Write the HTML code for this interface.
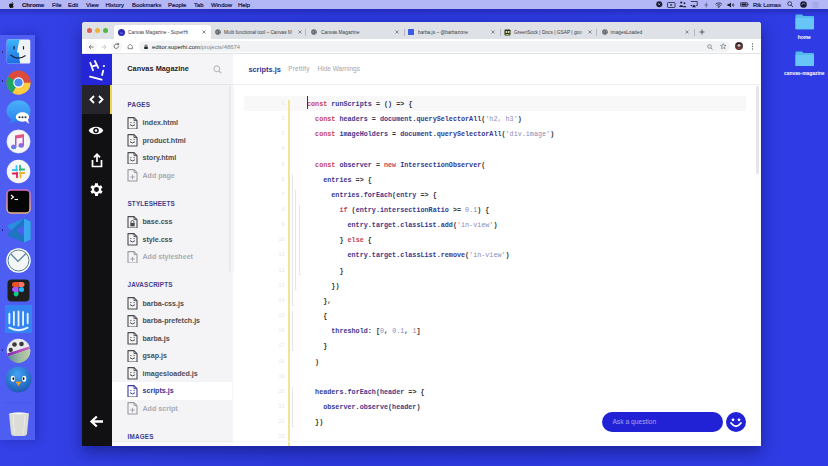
<!DOCTYPE html>
<html><head><meta charset="utf-8">
<style>
*{margin:0;padding:0;box-sizing:border-box}
html,body{width:828px;height:466px;overflow:hidden}
body{position:relative;font-family:"Liberation Sans",sans-serif;background:#2c38de}
.a{position:absolute}
.t{position:absolute;white-space:nowrap;line-height:1}
#desk{left:0;top:0;width:828px;height:466px;background:linear-gradient(180deg,rgba(10,10,90,.28) 9px,rgba(10,10,90,.12) 13px,rgba(10,10,90,0) 16px),linear-gradient(90deg,#3441e6 0%,#2d39dd 40%,#2f3ce5 100%)}
#menubar{left:0;top:0;width:828px;height:9px;background:#b3b7f6}
#menubar .t{top:2.5px;font-size:5.9px;color:#15154a;-webkit-text-stroke:0.2px #15154a}
#dock{left:0;top:34.800px;width:34.800px;height:405px;background:#4f5ef2;box-shadow:2px 0 9px rgba(20,25,140,.45)}
.di{position:absolute;left:6px;width:24px;height:24px;border-radius:6px}
.dot{position:absolute;left:1.5px;width:1.6px;height:1.6px;border-radius:1px;background:#1a1f60}
#win{left:82px;top:22px;width:679px;height:424px;background:#fff;border-radius:3px 3px 0 0;box-shadow:0 6px 16px rgba(10,15,90,.55)}
#tabs{left:0;top:0;width:679px;height:16.5px;background:#dee1e6;border-radius:3px 3px 0 0}
#toolbar{left:0;top:16.5px;width:679px;height:15px;background:#fff;border-bottom:1px solid #e3e3e3}
.tab .t{font-size:4.8px;color:#3c4043;top:7.4px}
.tl{position:absolute;top:5.7px;width:5.4px;height:5.4px;border-radius:50%}
#rail{left:0;top:31.5px;width:30px;height:392.5px;background:#111113}
#side{left:30px;top:31.5px;width:121px;height:392.5px;background:#f4f4f6}
#main{left:151px;top:31.5px;width:528px;height:392.5px;background:#fff}
.fn{position:absolute;left:30px;font-size:6.9px;font-weight:bold;color:#4a4a4e;white-space:nowrap;line-height:1}
.sec{position:absolute;left:15.5px;font-size:6.3px;font-weight:bold;color:#3a3a9a;letter-spacing:.25px;white-space:nowrap;line-height:1}
.fi{position:absolute;left:15px;width:11px;height:12px}
.code{position:absolute;font-family:"Liberation Mono",monospace;font-size:6.67px;line-height:1;white-space:pre;color:#38388e;font-weight:bold;transform:scaleY(1.1);transform-origin:0 55%}
.k{color:#c4435a}
.s{color:#8c8cb4;font-weight:normal}
.p{color:#333}
.ln{position:absolute;font-family:"Liberation Mono",monospace;font-size:5px;color:#e6e6ea;line-height:1;text-align:right;width:12px}
</style></head><body>
<div id="desk" class="a"></div>

<!-- menu bar -->
<div id="menubar" class="a">
  <svg class="a" style="left:9px;top:1.5px" width="5" height="6" viewBox="0 0 10 12"><path d="M8.3 6.4c0-1.5 1.2-2.2 1.3-2.3-.7-1-1.8-1.2-2.2-1.2-.9-.1-1.8.6-2.3.6-.5 0-1.2-.5-2-.5C2 3 1 3.6.5 4.6c-1 1.8-.3 4.4.7 5.8.5.7 1 1.5 1.8 1.4.7 0 1-.5 1.9-.5s1.1.5 1.9.4c.8 0 1.3-.7 1.7-1.4.5-.8.7-1.6.8-1.6-.1 0-1.6-.6-1.6-2.300zM6.900 2c.4-.5.7-1.200.6-1.900-.6 0-1.300.4-1.700.9-.4.4-.7 1.100-.6 1.800.7.100 1.300-.300 1.700-.800z" fill="#111"/></svg>
  <div class="t" style="left:22px;font-weight:bold">Chrome</div>
  <div class="t" style="left:52px">File</div>
  <div class="t" style="left:68px">Edit</div>
  <div class="t" style="left:86px">View</div>
  <div class="t" style="left:105.5px">History</div>
  <div class="t" style="left:132px">Bookmarks</div>
  <div class="t" style="left:168px">People</div>
  <div class="t" style="left:194px">Tab</div>
  <div class="t" style="left:211px">Window</div>
  <div class="t" style="left:238px">Help</div>
  <div class="t" style="left:753px">Rik Lomas</div>
  <svg class="a" style="left:656px;top:1.300px" width="6.500" height="6.500" viewBox="0 0 13 13"><circle cx="6.500" cy="6.500" r="6" fill="#1b1b30"/><path d="M4 6.500H9M6.500 4V9" stroke="#b3b7f6" stroke-width="1.400" transform="rotate(45 6.500 6.500)"/></svg>
  <svg class="a" style="left:667px;top:1.600px" width="8.500" height="6" viewBox="0 0 17 12"><rect x="1" y="1" width="15" height="10" rx="1.500" stroke="#1b1b30" stroke-width="1.500" fill="none"/><path d="M7 3.500L11 6L7 8.500Z" fill="#1b1b30"/></svg>
  <svg class="a" style="left:679px;top:1.300px" width="7.500" height="6.500" viewBox="0 0 15 13"><circle cx="4.500" cy="3" r="2.200" fill="#1b1b30"/><path d="M0.500 12C0.500 7 8.500 7 8.500 12Z" fill="#1b1b30"/><circle cx="11" cy="4.500" r="1.800" fill="#1b1b30"/><path d="M8 12.500C8 9 14.500 9 14.500 12.500Z" fill="#1b1b30"/></svg>
  <svg class="a" style="left:690px;top:1.400px" width="8" height="6.500" viewBox="0 0 16 13"><path d="M1.500 1H14.500V9H11.500M4.500 9H1.500Z" stroke="#1b1b30" stroke-width="1.500" fill="none"/><path d="M8 7L12 12.500H4Z" fill="#1b1b30"/></svg>
  <svg class="a" style="left:704px;top:1.500px" width="4.500" height="6" viewBox="0 0 9 12"><path d="M1 6H8M4.500 1V11" stroke="#1b1b30" stroke-width="1.200" opacity=".8"/></svg>
  <svg class="a" style="left:715px;top:1.500px" width="7.500" height="6" viewBox="0 0 15 12"><path d="M1 4.500A9 9 0 0 1 14 4.500M3.300 7A6 6 0 0 1 11.700 7M5.500 9.300A3 3 0 0 1 9.500 9.300" stroke="#1b1b30" stroke-width="1.600" fill="none"/><circle cx="7.500" cy="11" r="1" fill="#1b1b30"/></svg>
  <svg class="a" style="left:727px;top:1.500px" width="8" height="6" viewBox="0 0 16 12"><path d="M1 4H4L8 1V11L4 8H1Z" fill="#1b1b30"/><path d="M10.500 4A3 3 0 0 1 10.500 8M12.500 2.500A5.500 5.500 0 0 1 12.500 9.500" stroke="#1b1b30" stroke-width="1.300" fill="none"/></svg>
  <svg class="a" style="left:740px;top:2px" width="9" height="5" viewBox="0 0 18 10"><rect x="1" y="1" width="14" height="8" rx="1.500" stroke="#1b1b30" stroke-width="1.300" fill="none"/><rect x="2.800" y="2.800" width="10.500" height="4.400" fill="#1b1b30"/><path d="M16.500 3.500V6.500" stroke="#1b1b30" stroke-width="1.300"/></svg>
  <svg class="a" style="left:787px;top:1.400px" width="6.500" height="6.500" viewBox="0 0 13 13"><circle cx="5.300" cy="5.300" r="3.900" stroke="#1b1b30" stroke-width="1.500" fill="none"/><path d="M8.300 8.300L12 12" stroke="#1b1b30" stroke-width="1.700"/></svg>
  <svg class="a" style="left:800px;top:1px" width="7" height="7" viewBox="0 0 14 14"><circle cx="7" cy="7" r="6.500" fill="#1b1b30"/><path d="M3.500 7.500C5 4 9 4 10.500 6.500" stroke="#b3b7f6" stroke-width="1.500" fill="none"/></svg>
  <svg class="a" style="left:812px;top:1.500px" width="7" height="6" viewBox="0 0 14 12"><path d="M1 2H13M1 6H13M1 10H13" stroke="#8f93d8" stroke-width="1.400"/></svg>

</div>

<!-- dock -->
<div id="dock" class="a"></div>
<svg class="a" style="left:6.00px;top:39.10px" width="25" height="25" viewBox="0 0 50 50"><defs><linearGradient id="fg" x1="0" y1="0" x2="0" y2="1"><stop offset="0" stop-color="#3fb4f8"/><stop offset="1" stop-color="#1c6fe3"/></linearGradient></defs>
<rect x="1.500" y="1" width="47" height="48" rx="3" fill="#f0f3f6"/>
<path d="M4.500 1H27.500C25 9 23.500 17 22 27H26C26 35 27 42 28.500 49H4.500A3 3 0 0 1 1.500 46V4A3 3 0 0 1 4.500 1Z" fill="url(#fg)"/>
<path d="M16 15V20M35 15V20" stroke="#152030" stroke-width="2.400" stroke-linecap="round"/>
<path d="M9 32Q24 44 39 33" stroke="#152030" stroke-width="2.200" fill="none"/></svg>
<svg class="a" style="left:6.00px;top:69.50px" width="25" height="25" viewBox="0 0 50 50"><circle cx="25" cy="25" r="24" fill="#dd4b3e"/>
<path d="M25 25L4.200 13A24 24 0 0 0 13 46Z" fill="#1fa463"/>
<path d="M25 25L13 46A24 24 0 0 0 49 25Z" fill="#ffcd40"/>
<path d="M25 25L4.200 13A24 24 0 0 1 25 1A24 24 0 0 1 45.800 13Z" fill="#db4437" opacity="0"/>
<path d="M25 25H49A24 24 0 0 0 45.800 13H25Z" fill="#dd4b3e"/>
<circle cx="25" cy="25" r="10.500" fill="#fff"/><circle cx="25" cy="25" r="8.200" fill="#4a8af4"/></svg>
<svg class="a" style="left:6.00px;top:99.80px" width="25" height="25" viewBox="0 0 50 50"><defs><linearGradient id="msg" x1="0" y1="0" x2="0" y2="1"><stop offset="0" stop-color="#4bb0f8"/><stop offset="1" stop-color="#2a86ee"/></linearGradient></defs><ellipse cx="25" cy="22" rx="24" ry="21.500" fill="url(#msg)"/><path d="M12 38Q8 45 4 47Q14 46 19 41Z" fill="#2a86ee"/>
<ellipse cx="33" cy="34" rx="13.500" ry="9.500" fill="#fff"/><path d="M38 41Q42 46 47 47Q44 43 44 39Z" fill="#fff"/>
<circle cx="27" cy="34.500" r="2.100" fill="#333"/><circle cx="33" cy="34.500" r="2.100" fill="#333"/><circle cx="39" cy="34.500" r="2.100" fill="#333"/></svg>
<svg class="a" style="left:6.00px;top:129.00px" width="25" height="25" viewBox="0 0 50 50"><circle cx="25" cy="25" r="23.500" fill="#f6f6f8"/><circle cx="25" cy="25" r="23" fill="none" stroke="#ddd" stroke-width="1"/>
<defs><linearGradient id="mg" x1="0" y1="0" x2="0" y2="1"><stop offset="0" stop-color="#f4506a"/><stop offset=".55" stop-color="#b64fd0"/><stop offset="1" stop-color="#4f8ff2"/></linearGradient></defs>
<path d="M18 13L36 10V33A5.500 4.500 0 1 1 33 29V17L21 19V36A5.500 4.500 0 1 1 18 32Z" fill="url(#mg)"/></svg>
<svg class="a" style="left:6.00px;top:159.00px" width="25" height="25" viewBox="0 0 50 50"><circle cx="25" cy="25" r="23.500" fill="#f6f6f8"/>
<g stroke-width="3.600" stroke-linecap="round"><path d="M21 14V23" stroke="#36c5f0"/><path d="M13.500 22H22" stroke="#36c5f0"/>
<path d="M36.500 21H28" stroke="#2eb67d"/><path d="M28 13.500V22" stroke="#2eb67d"/>
<path d="M29 36.500V27" stroke="#ecb22e"/><path d="M36.500 28H28" stroke="#ecb22e"/>
<path d="M13.500 29H22" stroke="#e01e5a"/><path d="M22 36.500V28" stroke="#e01e5a"/></g></svg>
<svg class="a" style="left:6.00px;top:188.50px" width="25" height="25" viewBox="0 0 50 50"><defs><linearGradient id="tb" x1="0" y1="0" x2="0" y2="1"><stop offset="0" stop-color="#d66cc8"/><stop offset="1" stop-color="#f2b27a"/></linearGradient></defs><rect x="2" y="2" width="46" height="46" rx="8" fill="#050505" stroke="url(#tb)" stroke-width="3"/>
<path d="M10 12L15 16L10 20" stroke="#fff" stroke-width="2.200" fill="none"/><path d="M17 21H24" stroke="#fff" stroke-width="2.200"/></svg>
<svg class="a" style="left:6.00px;top:218.00px" width="25" height="25" viewBox="0 0 50 50"><path d="M36 1L49 7V43L36 49L2 17L6 13Z" fill="#2a8ee0"/><path d="M36 49L49 43V7L36 1L2 33L6 37Z" fill="#1f74c4"/><path d="M36 1L49 7V43L36 49Z" fill="#3aa6f2"/><path d="M36 14V36L22 25Z" fill="#4f5ef2"/></svg>
<svg class="a" style="left:6.00px;top:248.00px" width="25" height="25" viewBox="0 0 50 50"><circle cx="25" cy="25" r="24.500" fill="#fff"/><circle cx="25" cy="25" r="21" fill="#f4f6f7" stroke="#4f7f94" stroke-width="2"/>
<path d="M10 12L24 27L40 11" stroke="#4f7f94" stroke-width="2.400" fill="none"/></svg>
<svg class="a" style="left:6.00px;top:277.80px" width="25" height="25" viewBox="0 0 50 50"><rect x="3" y="3" width="44" height="44" rx="8" fill="#1e1e1e"/>
<path d="M17 8H25V18H17A5 5 0 0 1 17 8Z" fill="#f24e1e"/><path d="M25 8H32A5 5 0 0 1 32 18H25Z" fill="#ff7262"/>
<path d="M17 18H25V28H17A5 5 0 0 1 17 18Z" fill="#a259ff"/><circle cx="31" cy="23" r="5" fill="#1abcfe"/>
<path d="M17 28H25V33A5 5 0 1 1 17 28Z" fill="#0acf83"/></svg>
<svg class="a" style="left:5.300px;top:304.500px" width="27" height="28" viewBox="0 0 50 50" preserveAspectRatio="none"><rect x="0" y="0" width="50" height="50" rx="2" fill="#3383f2"/>
<g stroke="#e8f4ff" stroke-width="3.400" stroke-linecap="round" transform="translate(0 4.500)"><path d="M8 11V28M16.500 8V31M25 7V32M33.500 8V31M42 11V28"/><path d="M8 36Q25 45 42 36" fill="none"/></g></svg>
<svg class="a" style="left:6.00px;top:337.50px" width="25" height="25" viewBox="0 0 50 50"><defs><linearGradient id="cg" x1="0" y1="0" x2="1" y2="0"><stop offset="0" stop-color="#7a2aa8"/><stop offset=".6" stop-color="#b04ab8"/><stop offset="1" stop-color="#c070c0"/></linearGradient><linearGradient id="cg2" x1="0" y1="0" x2="1" y2="0"><stop offset="0" stop-color="#5a8a9a"/><stop offset=".5" stop-color="#9ab8a0"/><stop offset="1" stop-color="#c0d0a0"/></linearGradient></defs>
<circle cx="25" cy="25" r="23.500" fill="#e8e8ee"/>
<path d="M2.500 31L48 16.500V22L4 37Z" fill="url(#cg)"/>
<path d="M4 37L48 22A23.500 23.500 0 0 1 4 37Z" fill="url(#cg2)"/>
<circle cx="17" cy="13" r="4.600" fill="#3a3a3a"/><circle cx="31" cy="12" r="4.600" fill="#3a3a3a"/><circle cx="9.500" cy="24" r="4.300" fill="#3a3a3a"/></svg>
<svg class="a" style="left:4.800px;top:366px" width="27" height="27" viewBox="0 0 50 50"><defs><radialGradient id="tg" cx=".45" cy=".3" r=".75"><stop offset="0" stop-color="#42a4f4"/><stop offset="1" stop-color="#1a56b0"/></radialGradient></defs>
<circle cx="25" cy="25" r="24" fill="url(#tg)"/>
<ellipse cx="14.500" cy="23.500" rx="3.800" ry="5.500" fill="#fff"/><ellipse cx="35.500" cy="23.500" rx="3.800" ry="5.500" fill="#fff"/>
<ellipse cx="15.500" cy="23.500" rx="1.700" ry="2.600" fill="#111"/><ellipse cx="34.500" cy="23.500" rx="1.700" ry="2.600" fill="#111"/>
<path d="M19.500 29H30.500L25 37Z" fill="#f59a23"/></svg>
<div class="a" style="left:5px;top:401.500px;width:27px;height:0.8px;background:#4958e6"></div>
<svg class="a" style="left:7.500px;top:410.500px" width="22" height="26" viewBox="0 0 44 52"><path d="M2 5Q22 1 42 5L38 45Q37 50 31 50H13Q7 50 6 45Z" fill="#dcdcd6"/><path d="M2 5Q22 1 42 5Q22 9 2 5Z" fill="#f4f4f2"/><path d="M10 9L13 46M34 9L31 46" stroke="#ececea" stroke-width="2"/></svg>
<div class="dot" style="top:51.00px"></div>
<div class="dot" style="top:80.20px"></div>
<div class="dot" style="top:229.20px"></div>
<div class="dot" style="top:349.20px"></div>

<!-- desktop icons -->
<svg class="a" style="left:794.500px;top:14px" width="19.500" height="15.500" viewBox="0 0 39 31"><path d="M1 3A2 2 0 0 1 3 1H14L17 4H36A2 2 0 0 1 38 6V29A1.500 1.500 0 0 1 36.500 30.500H2.500A1.500 1.500 0 0 1 1 29Z" fill="#57b8ee"/><path d="M1 8H38V29A1.500 1.500 0 0 1 36.500 30.500H2.500A1.500 1.500 0 0 1 1 29Z" fill="#68c6f6"/></svg>
<div class="t" style="left:797.700px;top:36px;font-size:4.900px;font-weight:bold;color:#fff">home</div>
<svg class="a" style="left:794.500px;top:50.500px" width="19.500" height="15.500" viewBox="0 0 39 31"><path d="M1 3A2 2 0 0 1 3 1H14L17 4H36A2 2 0 0 1 38 6V29A1.500 1.500 0 0 1 36.500 30.500H2.500A1.500 1.500 0 0 1 1 29Z" fill="#57b8ee"/><path d="M1 8H38V29A1.500 1.500 0 0 1 36.500 30.500H2.500A1.500 1.500 0 0 1 1 29Z" fill="#68c6f6"/></svg>
<div class="t" style="left:784px;top:72.300px;font-size:4.900px;font-weight:bold;color:#fff">canvas-magazine</div>


<!-- window -->
<div id="win" class="a">
  <div id="tabs" class="a">
    <div class="tl" style="left:4.7px;background:#e25b50"></div>
    <div class="tl" style="left:12.7px;background:#ebb435"></div>
    <div class="tl" style="left:20.7px;background:#52b842"></div>

    <!-- active tab -->
    <div class="a" style="left:31.5px;top:3px;width:97px;height:14px;background:#fff;border-radius:3px 3px 0 0"></div>
    <svg class="a" style="left:36px;top:6.5px" width="7" height="7" viewBox="0 0 14 14"><circle cx="7" cy="7" r="7" fill="#2b2bb8"/><path d="M4.5 7.5 Q7 10 9.5 7.5" stroke="#c9c9ff" stroke-width="1.2" fill="none"/></svg>
    <div class="t" style="left:46px;top:8.6px;font-size:4.8px;color:#3c4043">Canvas Magazine - SuperHi</div>
    <div class="a" style="left:110.5px;top:6px;width:9px;height:8px;background:linear-gradient(90deg,rgba(255,255,255,0),#fff 85%)"></div><svg class="a" style="left:119.5px;top:8px" width="4" height="4" viewBox="0 0 8 8"><path d="M1 1L7 7M7 1L1 7" stroke="#5f6368" stroke-width="1.4"/></svg>
<svg class="a" style="left:133px;top:7px" width="6" height="6" viewBox="0 0 12 12"><circle cx="6" cy="6" r="5.6" fill="#5f6368"/><path d="M3 3.5c1 .5 1.5 1.5 1 2.5s.5 2 1.5 2.5M7.5 1.5c-.5 1 0 2 1 2.200s1.500 1 1.700 2M8 10c.3-1 1-1.600 2-1.800" stroke="#dee1e6" stroke-width="1.100" fill="none"/></svg><div class="t" style="left:142px;top:8.6px;font-size:4.8px;color:#3c4043">Multi functional tool – Canvas M</div><div class="a" style="left:207.4px;top:6px;width:9px;height:8px;background:linear-gradient(90deg,rgba(222,225,230,0),#dee1e6 85%)"></div><svg class="a" style="left:216.39999999999998px;top:8px" width="4" height="4" viewBox="0 0 8 8"><path d="M1 1L7 7M7 1L1 7" stroke="#5f6368" stroke-width="1.400"/></svg><div class="a" style="left:223px;top:6.500px;width:0.7px;height:7px;background:#b4b8be"></div><svg class="a" style="left:229px;top:7px" width="6" height="6" viewBox="0 0 12 12"><circle cx="6" cy="6" r="5.6" fill="#5f6368"/><path d="M3 3.5c1 .5 1.5 1.5 1 2.5s.5 2 1.5 2.5M7.5 1.5c-.5 1 0 2 1 2.200s1.500 1 1.700 2M8 10c.3-1 1-1.600 2-1.800" stroke="#dee1e6" stroke-width="1.100" fill="none"/></svg><div class="t" style="left:239px;top:8.6px;font-size:4.8px;color:#3c4043">Canvas Magazine</div><div class="a" style="left:303.6px;top:6px;width:9px;height:8px;background:linear-gradient(90deg,rgba(222,225,230,0),#dee1e6 85%)"></div><svg class="a" style="left:312.6px;top:8px" width="4" height="4" viewBox="0 0 8 8"><path d="M1 1L7 7M7 1L1 7" stroke="#5f6368" stroke-width="1.400"/></svg><div class="a" style="left:321.6px;top:6.500px;width:0.7px;height:7px;background:#b4b8be"></div><div class="a" style="left:326px;top:7px;width:6px;height:6px;background:#3b5ce0;border-radius:.5px"></div><div class="t" style="left:336px;top:8.6px;font-size:4.8px;color:#3c4043">barba.js – @barbazone</div><div class="a" style="left:400.0px;top:6px;width:9px;height:8px;background:linear-gradient(90deg,rgba(222,225,230,0),#dee1e6 85%)"></div><svg class="a" style="left:409px;top:8px" width="4" height="4" viewBox="0 0 8 8"><path d="M1 1L7 7M7 1L1 7" stroke="#5f6368" stroke-width="1.400"/></svg><div class="a" style="left:418px;top:6.500px;width:0.7px;height:7px;background:#b4b8be"></div><svg class="a" style="left:421.5px;top:6.5px" width="7" height="7" viewBox="0 0 14 14"><rect x="1" y="1" width="12" height="12" rx="2" fill="#2b3020"/><circle cx="5" cy="6" r="2" fill="#e9e4b0"/><circle cx="9.500" cy="6" r="2" fill="#e9e4b0"/><path d="M3 11h8" stroke="#8ac53f" stroke-width="2"/></svg><div class="t" style="left:432px;top:8.6px;font-size:4.8px;color:#3c4043">GreenSock | Docs | GSAP | goo</div><div class="a" style="left:497.0px;top:6px;width:9px;height:8px;background:linear-gradient(90deg,rgba(222,225,230,0),#dee1e6 85%)"></div><svg class="a" style="left:506px;top:8px" width="4" height="4" viewBox="0 0 8 8"><path d="M1 1L7 7M7 1L1 7" stroke="#5f6368" stroke-width="1.400"/></svg><div class="a" style="left:514px;top:6.500px;width:0.7px;height:7px;background:#b4b8be"></div><svg class="a" style="left:519.5px;top:7px" width="6" height="6" viewBox="0 0 12 12"><circle cx="6" cy="6" r="5.6" fill="#5f6368"/><path d="M3 3.5c1 .5 1.5 1.5 1 2.5s.5 2 1.5 2.5M7.5 1.5c-.5 1 0 2 1 2.200s1.500 1 1.700 2M8 10c.3-1 1-1.600 2-1.800" stroke="#dee1e6" stroke-width="1.100" fill="none"/></svg><div class="t" style="left:528.6px;top:8.6px;font-size:4.8px;color:#3c4043">imagesLoaded</div><div class="a" style="left:593.7px;top:6px;width:9px;height:8px;background:linear-gradient(90deg,rgba(222,225,230,0),#dee1e6 85%)"></div><svg class="a" style="left:602.7px;top:8px" width="4" height="4" viewBox="0 0 8 8"><path d="M1 1L7 7M7 1L1 7" stroke="#5f6368" stroke-width="1.400"/></svg><div class="a" style="left:611.6px;top:6.500px;width:0.7px;height:7px;background:#b4b8be"></div><svg class="a" style="left:617px;top:7px" width="6" height="6" viewBox="0 0 12 12"><path d="M6 1V11M1 6H11" stroke="#3c4043" stroke-width="1.600"/></svg>  </div>
  <div id="toolbar" class="a">
    <div class="a" style="left:3.5px;top:2.5px;width:11px;height:11px;border-radius:50%;background:#f7f7f7"></div>
    <svg class="a" style="left:6px;top:5px" width="6" height="6" viewBox="0 0 12 12"><path d="M11 6H2M6 2L2 6L6 10" stroke="#5f6368" stroke-width="1.600" fill="none"/></svg>
    <svg class="a" style="left:18.7px;top:5px" width="6" height="6" viewBox="0 0 12 12"><path d="M1 6H10M6 2L10 6L6 10" stroke="#bdc1c6" stroke-width="1.600" fill="none"/></svg>
    <div class="a" style="left:29px;top:2.5px;width:11px;height:11px;border-radius:50%;background:#f7f7f7"></div>
    <svg class="a" style="left:31.3px;top:4.8px" width="6.5" height="6.5" viewBox="0 0 12 12"><path d="M10 6A4 4 0 1 1 8.800 3.200" stroke="#5f6368" stroke-width="1.600" fill="none"/><path d="M7.500 1H10.500V4Z" fill="#5f6368" stroke="#5f6368" stroke-width="1"/></svg>
    <svg class="a" style="left:44.5px;top:4.8px" width="6.5" height="6.5" viewBox="0 0 12 12"><path d="M2 6L6 2L10 6V10.500H2Z" stroke="#5f6368" stroke-width="1.400" fill="none" stroke-linejoin="round"/></svg>
    <div class="a" style="left:57px;top:2.800px;width:591px;height:10.4px;border-radius:5.200px;background:#f1f3f4"></div>
    <svg class="a" style="left:61.5px;top:5.3px" width="4" height="5.500" viewBox="0 0 8 11"><path d="M2 5V3.500A2 2 0 0 1 6 3.500V5" stroke="#202124" stroke-width="1.300" fill="none"/><rect x="0.500" y="5" width="7" height="5.500" rx="1" fill="#202124"/></svg>
    <div class="t" style="left:70px;top:6.1px;font-size:5.86px;color:#202124">editor.superhi.com<span style="color:#80868b">/projects/48674</span></div>
    <svg class="a" style="left:624.5px;top:5px" width="6" height="6" viewBox="0 0 12 12"><circle cx="5" cy="5" r="3.600" stroke="#5f6368" stroke-width="1.300" fill="none"/><path d="M7.800 7.800L11 11" stroke="#5f6368" stroke-width="1.400"/></svg>
    <svg class="a" style="left:638px;top:4.7px" width="6.500" height="6.500" viewBox="0 0 12 12"><path d="M6 1L7.400 4.300L11 4.600L8.300 7L9.100 10.600L6 8.700L2.900 10.600L3.700 7L1 4.600L4.600 4.300Z" stroke="#5f6368" stroke-width="1.100" fill="none" stroke-linejoin="round"/></svg>
    <svg class="a" style="left:653px;top:3.7px" width="8" height="8" viewBox="0 0 16 16"><circle cx="8" cy="8" r="8" fill="#4b3b3e"/><circle cx="8" cy="6.500" r="3" fill="#e8c0b0"/><path d="M2.500 13.500C4 10.500 12 10.500 13.500 13.500" fill="#c2302e"/><path d="M3 4C4 1.500 12 1.500 13 4L12 6C10 3.500 6 3.500 4 6Z" fill="#2a1a1a"/></svg>
    <svg class="a" style="left:668.5px;top:4.5px" width="3" height="7" viewBox="0 0 4 14"><circle cx="2" cy="2" r="1.300" fill="#5f6368"/><circle cx="2" cy="7" r="1.300" fill="#5f6368"/><circle cx="2" cy="12" r="1.300" fill="#5f6368"/></svg>
  </div>
  <div id="rail" class="a">
    <div class="a" style="left:0;top:0;width:30px;height:31px;background:#2626d9"></div>
    <svg class="a" style="left:0;top:0" width="30" height="31" viewBox="0 0 30 31"><g stroke="#fff" stroke-width="1.800" stroke-linecap="round" fill="none"><path d="M8.300 8.800L11 16.300M12.900 7L16.300 13.800M9.900 12.600L14.500 11.100M21.200 16.700L20.100 21M8 22.600L19.600 25.700"/></g><circle cx="21.900" cy="12" r="1.100" fill="#fff"/></svg>
    <div class="a" style="left:0;top:31px;width:30px;height:29.500px;background:#25252b"></div>
    <div class="a" style="left:28px;top:31px;width:2px;height:29.500px;background:#f0d64a"></div>
    <svg class="a" style="left:6.500px;top:41.500px" width="15" height="9" viewBox="0 0 15 9"><path d="M5 1L1.500 4.500L5 8M10 1L13.500 4.500L10 8" stroke="#fff" stroke-width="1.900" fill="none"/></svg>
    <svg class="a" style="left:6.400px;top:71.300px" width="16" height="11" viewBox="0 0 30 21"><path d="M1 10.500C6 1 24 1 29 10.500C24 20 6 20 1 10.500Z" fill="#fff"/><circle cx="15" cy="10.500" r="5.300" fill="#111113"/><circle cx="15" cy="10.500" r="2.300" fill="#fff"/></svg>
    <svg class="a" style="left:8.500px;top:99px" width="12" height="15" viewBox="0 0 12 15"><path d="M6 9V1.500M3 4.300L6 1.300L9 4.300" stroke="#fff" stroke-width="1.700" fill="none"/><path d="M1.500 7V13.500H10.500V7" stroke="#fff" stroke-width="1.700" fill="none"/></svg>
    <svg class="a" style="left:5.500px;top:127.600px" width="17" height="17" viewBox="0 0 24 24"><path fill="#fff" d="M19.400 13a7.600 7.600 0 0 0 0-2l2.100-1.600-2-3.500-2.500 1a7.300 7.300 0 0 0-1.700-1L15 3h-4l-.4 2.900a7.300 7.300 0 0 0-1.700 1l-2.500-1-2 3.500L6.600 11a7.600 7.600 0 0 0 0 2l-2.100 1.600 2 3.500 2.500-1a7.300 7.300 0 0 0 1.700 1L11 21h4l.4-2.900a7.300 7.300 0 0 0 1.700-1l2.500 1 2-3.500zM13 15.500A3.500 3.500 0 1 1 13 8.500a3.500 3.500 0 0 1 0 7z" transform="translate(-1 0)"/></svg>
    <svg class="a" style="left:6.500px;top:361.500px" width="15" height="13" viewBox="0 0 15 13"><path d="M14 6.500H3M7.800 1.500L2.500 6.500L7.800 11.500" stroke="#fff" stroke-width="2.300" fill="none"/></svg>
  </div>
  <!--SIDE--><div id="side" class="a">
<div class="a" style="left:0;top:0;width:120.600px;height:31.8px;background:#f5f5f7;border-bottom:1px solid #e6e6ea"></div>
<div class="t" style="left:15.300px;top:11.52px;font-size:7.3px;font-weight:bold;color:#222226;letter-spacing:.05px">Canvas Magazine</div>
<svg class="a" style="left:100.500px;top:11.200px" width="9" height="9" viewBox="0 0 9 9"><circle cx="3.800" cy="3.800" r="2.900" stroke="#bdbdc2" stroke-width="1.200" fill="none"/><path d="M6 6L8.300 8.300" stroke="#bdbdc2" stroke-width="1.400"/></svg>
<div class="a" style="left:118.800px;top:32.6px;width:1.800px;height:185.9px;background:#f6f6f8"></div>
<div class="a" style="left:116.500px;top:32.6px;width:2.700px;height:185.9px;background:#e8e8eb;border-radius:1.300px"></div>
<div class="a" style="left:0;top:328.90px;width:120px;height:17.600px;background:#fff"></div>
<div class="t" style="left:15.500px;top:48.41px;font-size:6.3px;font-weight:bold;color:#3d3d8e;letter-spacing:0.22px">PAGES</div>
<svg class="a" style="left:15.300px;top:63.20px" width="11" height="12.600" viewBox="0 0 11 12.600"><path d="M1 .6H7L10 3.600V12H1Z" stroke="#4a4a4e" stroke-width="1.1" fill="none" stroke-linejoin="round"/><path d="M7 .6V3.600H10" stroke="#4a4a4e" stroke-width=".9" fill="none"/><circle cx="3.900" cy="5.600" r=".65" fill="#4a4a4e"/><circle cx="7.100" cy="5.600" r=".65" fill="#4a4a4e"/><path d="M3 7.700Q5.500 10.200 8 7.700" stroke="#4a4a4e" stroke-width="1" fill="none"/></svg>
<div class="t" style="left:30.500px;top:66.71px;font-size:7.1px;font-weight:bold;color:#4e4e52">index.html</div>
<svg class="a" style="left:15.300px;top:80.75px" width="11" height="12.600" viewBox="0 0 11 12.600"><path d="M1 .6H7L10 3.600V12H1Z" stroke="#4a4a4e" stroke-width="1.1" fill="none" stroke-linejoin="round"/><path d="M7 .6V3.600H10" stroke="#4a4a4e" stroke-width=".9" fill="none"/><circle cx="3.900" cy="5.600" r=".65" fill="#4a4a4e"/><circle cx="7.100" cy="5.600" r=".65" fill="#4a4a4e"/><path d="M3 7.700Q5.500 10.200 8 7.700" stroke="#4a4a4e" stroke-width="1" fill="none"/></svg>
<div class="t" style="left:30.500px;top:84.26px;font-size:7.1px;font-weight:bold;color:#4e4e52">product.html</div>
<svg class="a" style="left:15.300px;top:98.30px" width="11" height="12.600" viewBox="0 0 11 12.600"><path d="M1 .6H7L10 3.600V12H1Z" stroke="#4a4a4e" stroke-width="1.1" fill="none" stroke-linejoin="round"/><path d="M7 .6V3.600H10" stroke="#4a4a4e" stroke-width=".9" fill="none"/><circle cx="3.900" cy="5.600" r=".65" fill="#4a4a4e"/><circle cx="7.100" cy="5.600" r=".65" fill="#4a4a4e"/><path d="M3 7.700Q5.500 10.200 8 7.700" stroke="#4a4a4e" stroke-width="1" fill="none"/></svg>
<div class="t" style="left:30.500px;top:101.81px;font-size:7.1px;font-weight:bold;color:#4e4e52">story.html</div>
<svg class="a" style="left:15.300px;top:115.85px" width="11" height="12.600" viewBox="0 0 11 12.600"><path d="M1 .6H7L10 3.600V12H1Z" stroke="#9a9aa0" stroke-width="1.1" fill="none" stroke-linejoin="round"/><path d="M7 .6V3.600H10" stroke="#9a9aa0" stroke-width=".9" fill="none"/><path d="M5.500 5.800V10.200M3.300 8H7.700" stroke="#9a9aa0" stroke-width=".9"/></svg>
<div class="t" style="left:30.500px;top:119.36px;font-size:7.1px;font-weight:bold;color:#aaaab0">Add page</div>
<div class="t" style="left:15.500px;top:147.71px;font-size:6.3px;font-weight:bold;color:#3d3d8e;letter-spacing:0.17px">STYLESHEETS</div>
<svg class="a" style="left:15.300px;top:162.20px" width="11" height="12.600" viewBox="0 0 11 12.600"><path d="M1 .6H7L10 3.600V12H1Z" stroke="#4a4a4e" stroke-width="1.1" fill="none" stroke-linejoin="round"/><path d="M7 .6V3.600H10" stroke="#4a4a4e" stroke-width=".9" fill="none"/><path d="M4 7V6A1.500 1.500 0 0 1 7 6V7" stroke="#4a4a4e" stroke-width=".9" fill="none"/><rect x="3.300" y="7" width="4.400" height="3.400" fill="#4a4a4e"/></svg>
<div class="t" style="left:30.500px;top:165.71px;font-size:7.1px;font-weight:bold;color:#4e4e52">base.css</div>
<svg class="a" style="left:15.300px;top:179.75px" width="11" height="12.600" viewBox="0 0 11 12.600"><path d="M1 .6H7L10 3.600V12H1Z" stroke="#4a4a4e" stroke-width="1.1" fill="none" stroke-linejoin="round"/><path d="M7 .6V3.600H10" stroke="#4a4a4e" stroke-width=".9" fill="none"/><circle cx="3.900" cy="5.600" r=".65" fill="#4a4a4e"/><circle cx="7.100" cy="5.600" r=".65" fill="#4a4a4e"/><path d="M3 7.700Q5.500 10.200 8 7.700" stroke="#4a4a4e" stroke-width="1" fill="none"/></svg>
<div class="t" style="left:30.500px;top:183.26px;font-size:7.1px;font-weight:bold;color:#4e4e52">style.css</div>
<svg class="a" style="left:15.300px;top:197.30px" width="11" height="12.600" viewBox="0 0 11 12.600"><path d="M1 .6H7L10 3.600V12H1Z" stroke="#9a9aa0" stroke-width="1.1" fill="none" stroke-linejoin="round"/><path d="M7 .6V3.600H10" stroke="#9a9aa0" stroke-width=".9" fill="none"/><path d="M5.500 5.800V10.200M3.300 8H7.700" stroke="#9a9aa0" stroke-width=".9"/></svg>
<div class="t" style="left:30.500px;top:200.81px;font-size:7.1px;font-weight:bold;color:#aaaab0">Add stylesheet</div>
<div class="t" style="left:15.500px;top:228.91px;font-size:6.3px;font-weight:bold;color:#3d3d8e;letter-spacing:0.17px">JAVASCRIPTS</div>
<svg class="a" style="left:15.300px;top:243.50px" width="11" height="12.600" viewBox="0 0 11 12.600"><path d="M1 .6H7L10 3.600V12H1Z" stroke="#4a4a4e" stroke-width="1.1" fill="none" stroke-linejoin="round"/><path d="M7 .6V3.600H10" stroke="#4a4a4e" stroke-width=".9" fill="none"/><circle cx="3.900" cy="5.600" r=".65" fill="#4a4a4e"/><circle cx="7.100" cy="5.600" r=".65" fill="#4a4a4e"/><path d="M3 7.700Q5.500 10.200 8 7.700" stroke="#4a4a4e" stroke-width="1" fill="none"/></svg>
<div class="t" style="left:30.500px;top:247.01px;font-size:7.1px;font-weight:bold;color:#4e4e52">barba-css.js</div>
<svg class="a" style="left:15.300px;top:261.05px" width="11" height="12.600" viewBox="0 0 11 12.600"><path d="M1 .6H7L10 3.600V12H1Z" stroke="#4a4a4e" stroke-width="1.1" fill="none" stroke-linejoin="round"/><path d="M7 .6V3.600H10" stroke="#4a4a4e" stroke-width=".9" fill="none"/><circle cx="3.900" cy="5.600" r=".65" fill="#4a4a4e"/><circle cx="7.100" cy="5.600" r=".65" fill="#4a4a4e"/><path d="M3 7.700Q5.500 10.200 8 7.700" stroke="#4a4a4e" stroke-width="1" fill="none"/></svg>
<div class="t" style="left:30.500px;top:264.56px;font-size:7.1px;font-weight:bold;color:#4e4e52">barba-prefetch.js</div>
<svg class="a" style="left:15.300px;top:278.60px" width="11" height="12.600" viewBox="0 0 11 12.600"><path d="M1 .6H7L10 3.600V12H1Z" stroke="#4a4a4e" stroke-width="1.1" fill="none" stroke-linejoin="round"/><path d="M7 .6V3.600H10" stroke="#4a4a4e" stroke-width=".9" fill="none"/><circle cx="3.900" cy="5.600" r=".65" fill="#4a4a4e"/><circle cx="7.100" cy="5.600" r=".65" fill="#4a4a4e"/><path d="M3 7.700Q5.500 10.200 8 7.700" stroke="#4a4a4e" stroke-width="1" fill="none"/></svg>
<div class="t" style="left:30.500px;top:282.11px;font-size:7.1px;font-weight:bold;color:#4e4e52">barba.js</div>
<svg class="a" style="left:15.300px;top:296.15px" width="11" height="12.600" viewBox="0 0 11 12.600"><path d="M1 .6H7L10 3.600V12H1Z" stroke="#4a4a4e" stroke-width="1.1" fill="none" stroke-linejoin="round"/><path d="M7 .6V3.600H10" stroke="#4a4a4e" stroke-width=".9" fill="none"/><circle cx="3.900" cy="5.600" r=".65" fill="#4a4a4e"/><circle cx="7.100" cy="5.600" r=".65" fill="#4a4a4e"/><path d="M3 7.700Q5.500 10.200 8 7.700" stroke="#4a4a4e" stroke-width="1" fill="none"/></svg>
<div class="t" style="left:30.500px;top:299.66px;font-size:7.1px;font-weight:bold;color:#4e4e52">gsap.js</div>
<svg class="a" style="left:15.300px;top:313.70px" width="11" height="12.600" viewBox="0 0 11 12.600"><path d="M1 .6H7L10 3.600V12H1Z" stroke="#4a4a4e" stroke-width="1.1" fill="none" stroke-linejoin="round"/><path d="M7 .6V3.600H10" stroke="#4a4a4e" stroke-width=".9" fill="none"/><circle cx="3.900" cy="5.600" r=".65" fill="#4a4a4e"/><circle cx="7.100" cy="5.600" r=".65" fill="#4a4a4e"/><path d="M3 7.700Q5.500 10.200 8 7.700" stroke="#4a4a4e" stroke-width="1" fill="none"/></svg>
<div class="t" style="left:30.500px;top:317.21px;font-size:7.1px;font-weight:bold;color:#4e4e52">imagesloaded.js</div>
<svg class="a" style="left:15.300px;top:331.25px" width="11" height="12.600" viewBox="0 0 11 12.600"><path d="M1 .6H7L10 3.600V12H1Z" stroke="#3b3b9e" stroke-width="1.1" fill="none" stroke-linejoin="round"/><path d="M7 .6V3.600H10" stroke="#3b3b9e" stroke-width=".9" fill="none"/><circle cx="3.900" cy="5.600" r=".65" fill="#3b3b9e"/><circle cx="7.100" cy="5.600" r=".65" fill="#3b3b9e"/><path d="M3 7.700Q5.500 10.200 8 7.700" stroke="#3b3b9e" stroke-width="1" fill="none"/></svg>
<div class="t" style="left:30.500px;top:334.76px;font-size:7.1px;font-weight:bold;color:#34348f">scripts.js</div>
<svg class="a" style="left:15.300px;top:348.80px" width="11" height="12.600" viewBox="0 0 11 12.600"><path d="M1 .6H7L10 3.600V12H1Z" stroke="#9a9aa0" stroke-width="1.1" fill="none" stroke-linejoin="round"/><path d="M7 .6V3.600H10" stroke="#9a9aa0" stroke-width=".9" fill="none"/><path d="M5.500 5.800V10.200M3.300 8H7.700" stroke="#9a9aa0" stroke-width=".9"/></svg>
<div class="t" style="left:30.500px;top:352.31px;font-size:7.1px;font-weight:bold;color:#aaaab0">Add script</div>
<div class="t" style="left:15.500px;top:380.31px;font-size:6.3px;font-weight:bold;color:#3d3d8e;letter-spacing:0.22px">IMAGES</div>
<div class="a" style="left:0;top:387.50px;width:120.600px;height:5px;background:#fafafb;border-top:0.8px solid #ebebee"></div>
</div>
<!--/SIDE-->
<!--MAIN--><div id="main" class="a">
<div class="a" style="left:0;top:0;width:528px;height:31.8px;border-bottom:0.8px solid #f0f0f3"></div>
<div class="a" style="left:0;top:32.6px;width:2px;height:185.9px;background:linear-gradient(90deg,#f5f5f6,#fff)"></div>
<div class="t" style="left:15.40px;top:12.07px;font-size:7.4px;font-weight:bold;color:#34348f">scripts.js</div>
<div class="t" style="left:55.30px;top:12.32px;font-size:6.500px;letter-spacing:.15px;color:#a4a4aa">Prettify</div>
<div class="t" style="left:84.50px;top:12.32px;font-size:6.500px;color:#a4a4aa">Hide Warnings</div>
<div class="a" style="left:10.80px;top:42.90px;width:502.20px;height:14.400px;background:#f8f8f9"></div>
<div class="a" style="left:55.10px;top:46.50px;width:2px;height:346.00px;background:#f0e592"></div>
<div class="a" style="left:523.30px;top:32.00px;width:2.800px;height:88.50px;background:#e6e6e8;border-radius:1.400px"></div>
<div class="a" style="left:58.80px;top:120.95px;width:2.500px;height:131.20px;border-left:0.6px solid #e6e6ea;border-bottom:0.6px solid #e6e6ea"></div>
<div class="a" style="left:61.80px;top:136.10px;width:2.500px;height:100.90px;border-left:0.6px solid #e6e6ea;border-bottom:0.6px solid #e6e6ea"></div>
<div class="a" style="left:65.50px;top:151.25px;width:2.500px;height:70.60px;border-left:0.6px solid #e6e6ea;border-bottom:0.6px solid #e6e6ea"></div>
<div class="a" style="left:58.80px;top:257.30px;width:2.500px;height:40.30px;border-left:0.6px solid #e6e6ea;border-bottom:0.6px solid #e6e6ea"></div>
<div class="a" style="left:58.80px;top:333.05px;width:2.500px;height:40.30px;border-left:0.6px solid #e6e6ea;border-bottom:0.6px solid #e6e6ea"></div>
<div class="ln" style="left:39.50px;top:48.45px">1</div>
<div class="code" style="left:74.00px;top:47.49px;font-size:6.75px"><span class="k">const</span> runScripts <span class="p">=</span> <span class="p">(</span><span class="p">)</span> <span class="p">=</span><span class="p">&gt;</span> <span class="p">{</span></div>
<div class="ln" style="left:39.50px;top:63.60px">2</div>
<div class="code" style="left:74.00px;top:62.64px;font-size:6.75px">  <span class="k">const</span> headers <span class="p">=</span> document<span class="p">.</span>querySelectorAll<span class="p">(</span><span class="s">&#x27;h2, h3&#x27;</span><span class="p">)</span></div>
<div class="ln" style="left:39.50px;top:78.75px">3</div>
<div class="code" style="left:74.00px;top:77.79px;font-size:6.75px">  <span class="k">const</span> imageHolders <span class="p">=</span> document<span class="p">.</span>querySelectorAll<span class="p">(</span><span class="s">&#x27;div.image&#x27;</span><span class="p">)</span></div>
<div class="ln" style="left:39.50px;top:93.90px">4</div>
<div class="ln" style="left:39.50px;top:109.05px">5</div>
<div class="code" style="left:74.00px;top:108.09px;font-size:6.75px">  <span class="k">const</span> observer <span class="p">=</span> <span class="k">new</span> IntersectionObserver<span class="p">(</span></div>
<div class="ln" style="left:39.50px;top:124.20px">6</div>
<div class="code" style="left:74.00px;top:123.24px;font-size:6.75px">    entries <span class="p">=</span><span class="p">&gt;</span> <span class="p">{</span></div>
<div class="ln" style="left:39.50px;top:139.35px">7</div>
<div class="code" style="left:74.00px;top:138.39px;font-size:6.75px">      entries<span class="p">.</span>forEach<span class="p">(</span>entry <span class="p">=</span><span class="p">&gt;</span> <span class="p">{</span></div>
<div class="ln" style="left:39.50px;top:154.50px">8</div>
<div class="code" style="left:74.00px;top:153.54px;font-size:6.75px">        <span class="k">if</span> <span class="p">(</span>entry<span class="p">.</span>intersectionRatio <span class="p">&gt;</span><span class="p">=</span> <span class="s">0.1</span><span class="p">)</span> <span class="p">{</span></div>
<div class="ln" style="left:39.50px;top:169.65px">9</div>
<div class="code" style="left:74.00px;top:168.69px;font-size:6.75px">          entry<span class="p">.</span>target<span class="p">.</span>classList<span class="p">.</span>add<span class="p">(</span><span class="s">&#x27;in-view&#x27;</span><span class="p">)</span></div>
<div class="ln" style="left:39.50px;top:184.80px">10</div>
<div class="code" style="left:74.00px;top:183.84px;font-size:6.75px">        <span class="p">}</span> <span class="k">else</span> <span class="p">{</span></div>
<div class="ln" style="left:39.50px;top:199.95px">11</div>
<div class="code" style="left:74.00px;top:198.99px;font-size:6.75px">          entry<span class="p">.</span>target<span class="p">.</span>classList<span class="p">.</span>remove<span class="p">(</span><span class="s">&#x27;in-view&#x27;</span><span class="p">)</span></div>
<div class="ln" style="left:39.50px;top:215.10px">12</div>
<div class="code" style="left:74.00px;top:214.14px;font-size:6.75px">        <span class="p">}</span></div>
<div class="ln" style="left:39.50px;top:230.25px">13</div>
<div class="code" style="left:74.00px;top:229.29px;font-size:6.75px">      <span class="p">}</span><span class="p">)</span></div>
<div class="ln" style="left:39.50px;top:245.40px">14</div>
<div class="code" style="left:74.00px;top:244.44px;font-size:6.75px">    <span class="p">}</span><span class="p">,</span></div>
<div class="ln" style="left:39.50px;top:260.55px">15</div>
<div class="code" style="left:74.00px;top:259.59px;font-size:6.75px">    <span class="p">{</span></div>
<div class="ln" style="left:39.50px;top:275.70px">16</div>
<div class="code" style="left:74.00px;top:274.74px;font-size:6.75px">      threshold<span class="p">:</span> <span class="p">[</span><span class="s">0</span><span class="p">,</span> <span class="s">0.1</span><span class="p">,</span> <span class="s">1</span><span class="p">]</span></div>
<div class="ln" style="left:39.50px;top:290.85px">17</div>
<div class="code" style="left:74.00px;top:289.89px;font-size:6.75px">    <span class="p">}</span></div>
<div class="ln" style="left:39.50px;top:306.00px">18</div>
<div class="code" style="left:74.00px;top:305.04px;font-size:6.75px">  <span class="p">)</span></div>
<div class="ln" style="left:39.50px;top:321.15px">19</div>
<div class="ln" style="left:39.50px;top:336.30px">20</div>
<div class="code" style="left:74.00px;top:335.34px;font-size:6.75px">  headers<span class="p">.</span>forEach<span class="p">(</span>header <span class="p">=</span><span class="p">&gt;</span> <span class="p">{</span></div>
<div class="ln" style="left:39.50px;top:351.45px">21</div>
<div class="code" style="left:74.00px;top:350.49px;font-size:6.75px">    observer<span class="p">.</span>observe<span class="p">(</span>header<span class="p">)</span></div>
<div class="ln" style="left:39.50px;top:366.60px">22</div>
<div class="code" style="left:74.00px;top:365.64px;font-size:6.75px">  <span class="p">}</span><span class="p">)</span></div>
<div class="ln" style="left:39.50px;top:381.75px">23</div>
<div class="a" style="left:73.50px;top:42.80px;width:1.900px;height:12.800px;background:#2c2c90"></div>
<div class="a" style="left:0;top:387.50px;width:524px;height:0.8px;background:#f5f5f5"></div>
<div class="a" style="left:369.40px;top:358.30px;width:121px;height:19.800px;border-radius:10px;background:#2121d6"></div>
<div class="t" style="left:379.40px;top:365.52px;font-size:6.700px;color:#a4a4f2">Ask a question</div>
<svg class="a" style="left:493.40px;top:358.10px" width="20" height="20" viewBox="0 0 20 20"><circle cx="10" cy="10" r="10" fill="#2121d6"/><circle cx="7" cy="7.800" r="1.400" fill="#fff"/><circle cx="13" cy="7.800" r="1.400" fill="#fff"/><path d="M5 11Q10 17.500 15 11" stroke="#fff" stroke-width="1.800" fill="none" stroke-linecap="round"/></svg>
</div>
<!--/MAIN-->
</div>

</body></html>
